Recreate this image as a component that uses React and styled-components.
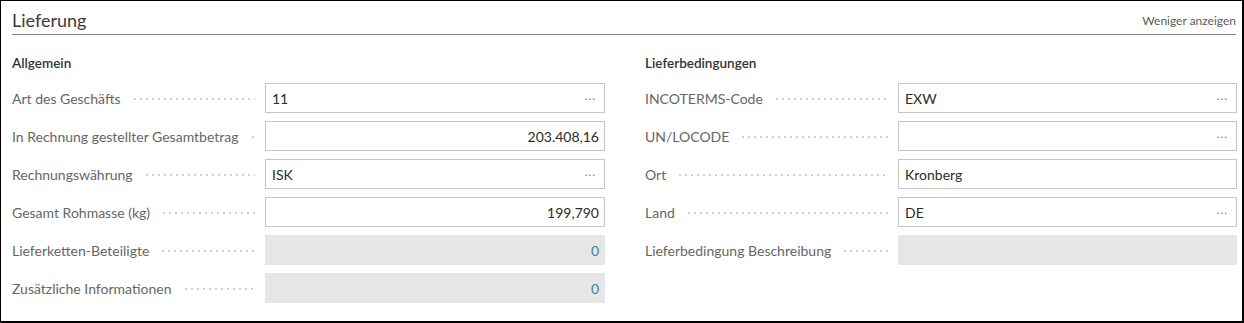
import React from 'react';
import styled, { createGlobalStyle } from 'styled-components';

const GlobalStyle = createGlobalStyle`
    html, body {
        margin: 0;
        padding: 0;
        background: #ffffff;
    }
    body {
        font-family: "Segoe UI", Lato, "Open Sans", sans-serif;
        color: #212121;
    }
`;

const left = [
    { label: 'Art des Geschäfts', value: '11', lookup: true },
    { label: 'In Rechnung gestellter Gesamtbetrag', value: '203.408,16', right: true },
    { label: 'Rechnungswährung', value: 'ISK', lookup: true },
    { label: 'Gesamt Rohmasse (kg)', value: '199,790', right: true },
    { label: 'Lieferketten-Beteiligte', value: '0', right: true, disabled: true, link: true },
    { label: 'Zusätzliche Informationen', value: '0', right: true, disabled: true, link: true },
];

const right = [
    { label: 'INCOTERMS-Code', value: 'EXW', lookup: true },
    { label: 'UN/LOCODE', value: '', lookup: true },
    { label: 'Ort', value: 'Kronberg' },
    { label: 'Land', value: 'DE', lookup: true },
    { label: 'Lieferbedingung Beschreibung', value: '', disabled: true },
];

function FieldRow({ label, value, lookup, right, disabled, link }) {
    return (
        <Row>
            <Label>
                <span>{label}</span>
                <Leader />
            </Label>
            <Input $disabled={disabled} $right={right}>
                <Value $link={link}>{value}</Value>
                {lookup && <Dots>...</Dots>}
            </Input>
        </Row>
    );
}

function App() {
    return (
        <>
            <GlobalStyle />
            <Frame>
                <Header>
                    <Title>Lieferung</Title>
                    <ShowLess>Weniger anzeigen</ShowLess>
                </Header>
                <Columns>
                    <Group>
                        <GroupTitle>Allgemein</GroupTitle>
                        {left.map(f => <FieldRow key={f.label} {...f} />)}
                    </Group>
                    <Group>
                        <GroupTitle>Lieferbedingungen</GroupTitle>
                        {right.map(f => <FieldRow key={f.label} {...f} />)}
                    </Group>
                </Columns>
            </Frame>
        </>
    );
}

const Frame = styled.div`
    width: 1244px;
    height: 323px;
    box-sizing: border-box;
    border: 1px solid #000;
    border-right-width: 2px;
    border-bottom-width: 2px;
    padding: 0 6px 0 11px;
    background: #fff;
`;

const Header = styled.div`
    display: flex;
    align-items: flex-end;
    justify-content: space-between;
    height: 32px;
    border-bottom: 1px solid #8a8886;
    padding-bottom: 1px;
`;

const Title = styled.h1`
    margin: 0;
    font-size: 18px;
    font-weight: 400;
    color: #3a3a3a;
    line-height: 26px;
`;

const ShowLess = styled.span`
    font-size: 12px;
    color: #5a5a5a;
    line-height: 20px;
    margin-bottom: 2px;
`;

const Columns = styled.div`
    display: grid;
    grid-template-columns: 593px 592px;
    column-gap: 40px;
    padding-top: 18px;
`;

const Group = styled.div`
    display: flex;
    flex-direction: column;
    gap: 8px;
`;

const GroupTitle = styled.h2`
    margin: 0 0 2px;
    font-size: 13.5px;
    font-weight: 600;
    color: #333333;
    line-height: 20px;
`;

const Row = styled.div`
    display: grid;
    grid-template-columns: 253px 1fr;
    height: 30px;
    align-items: center;
`;

const Label = styled.div`
    display: flex;
    align-items: center;
    font-size: 14px;
    color: #666666;
    white-space: nowrap;
    overflow: hidden;
    padding-right: 10px;
`;

const Leader = styled.span`
    flex: 1;
    height: 2px;
    margin-left: 11px;
    margin-top: 2px;
    background-image: radial-gradient(circle, #d0d0d0 0.8px, transparent 1px);
    background-size: 6px 2px;
    background-repeat: repeat-x;
`;

const Input = styled.div`
    display: flex;
    align-items: center;
    height: 30px;
    box-sizing: border-box;
    padding: 0 8px 0 6px;
    border: 1px solid ${p => (p.$disabled ? 'transparent' : '#c8c6c4')};
    background: ${p => (p.$disabled ? '#e4e6e8' : '#fff')};
    font-size: 14px;
    justify-content: ${p => (p.$right ? 'flex-end' : 'space-between')};
    padding-right: ${p => (p.$right ? '5px' : '8px')};
`;

const Value = styled.span`
    color: ${p => (p.$link ? '#3a8790' : '#2b2b2b')};
`;

const Dots = styled.span`
    color: #777;
    font-size: 12px;
    letter-spacing: 1px;
    margin-top: -6px;
`;

export default App;
